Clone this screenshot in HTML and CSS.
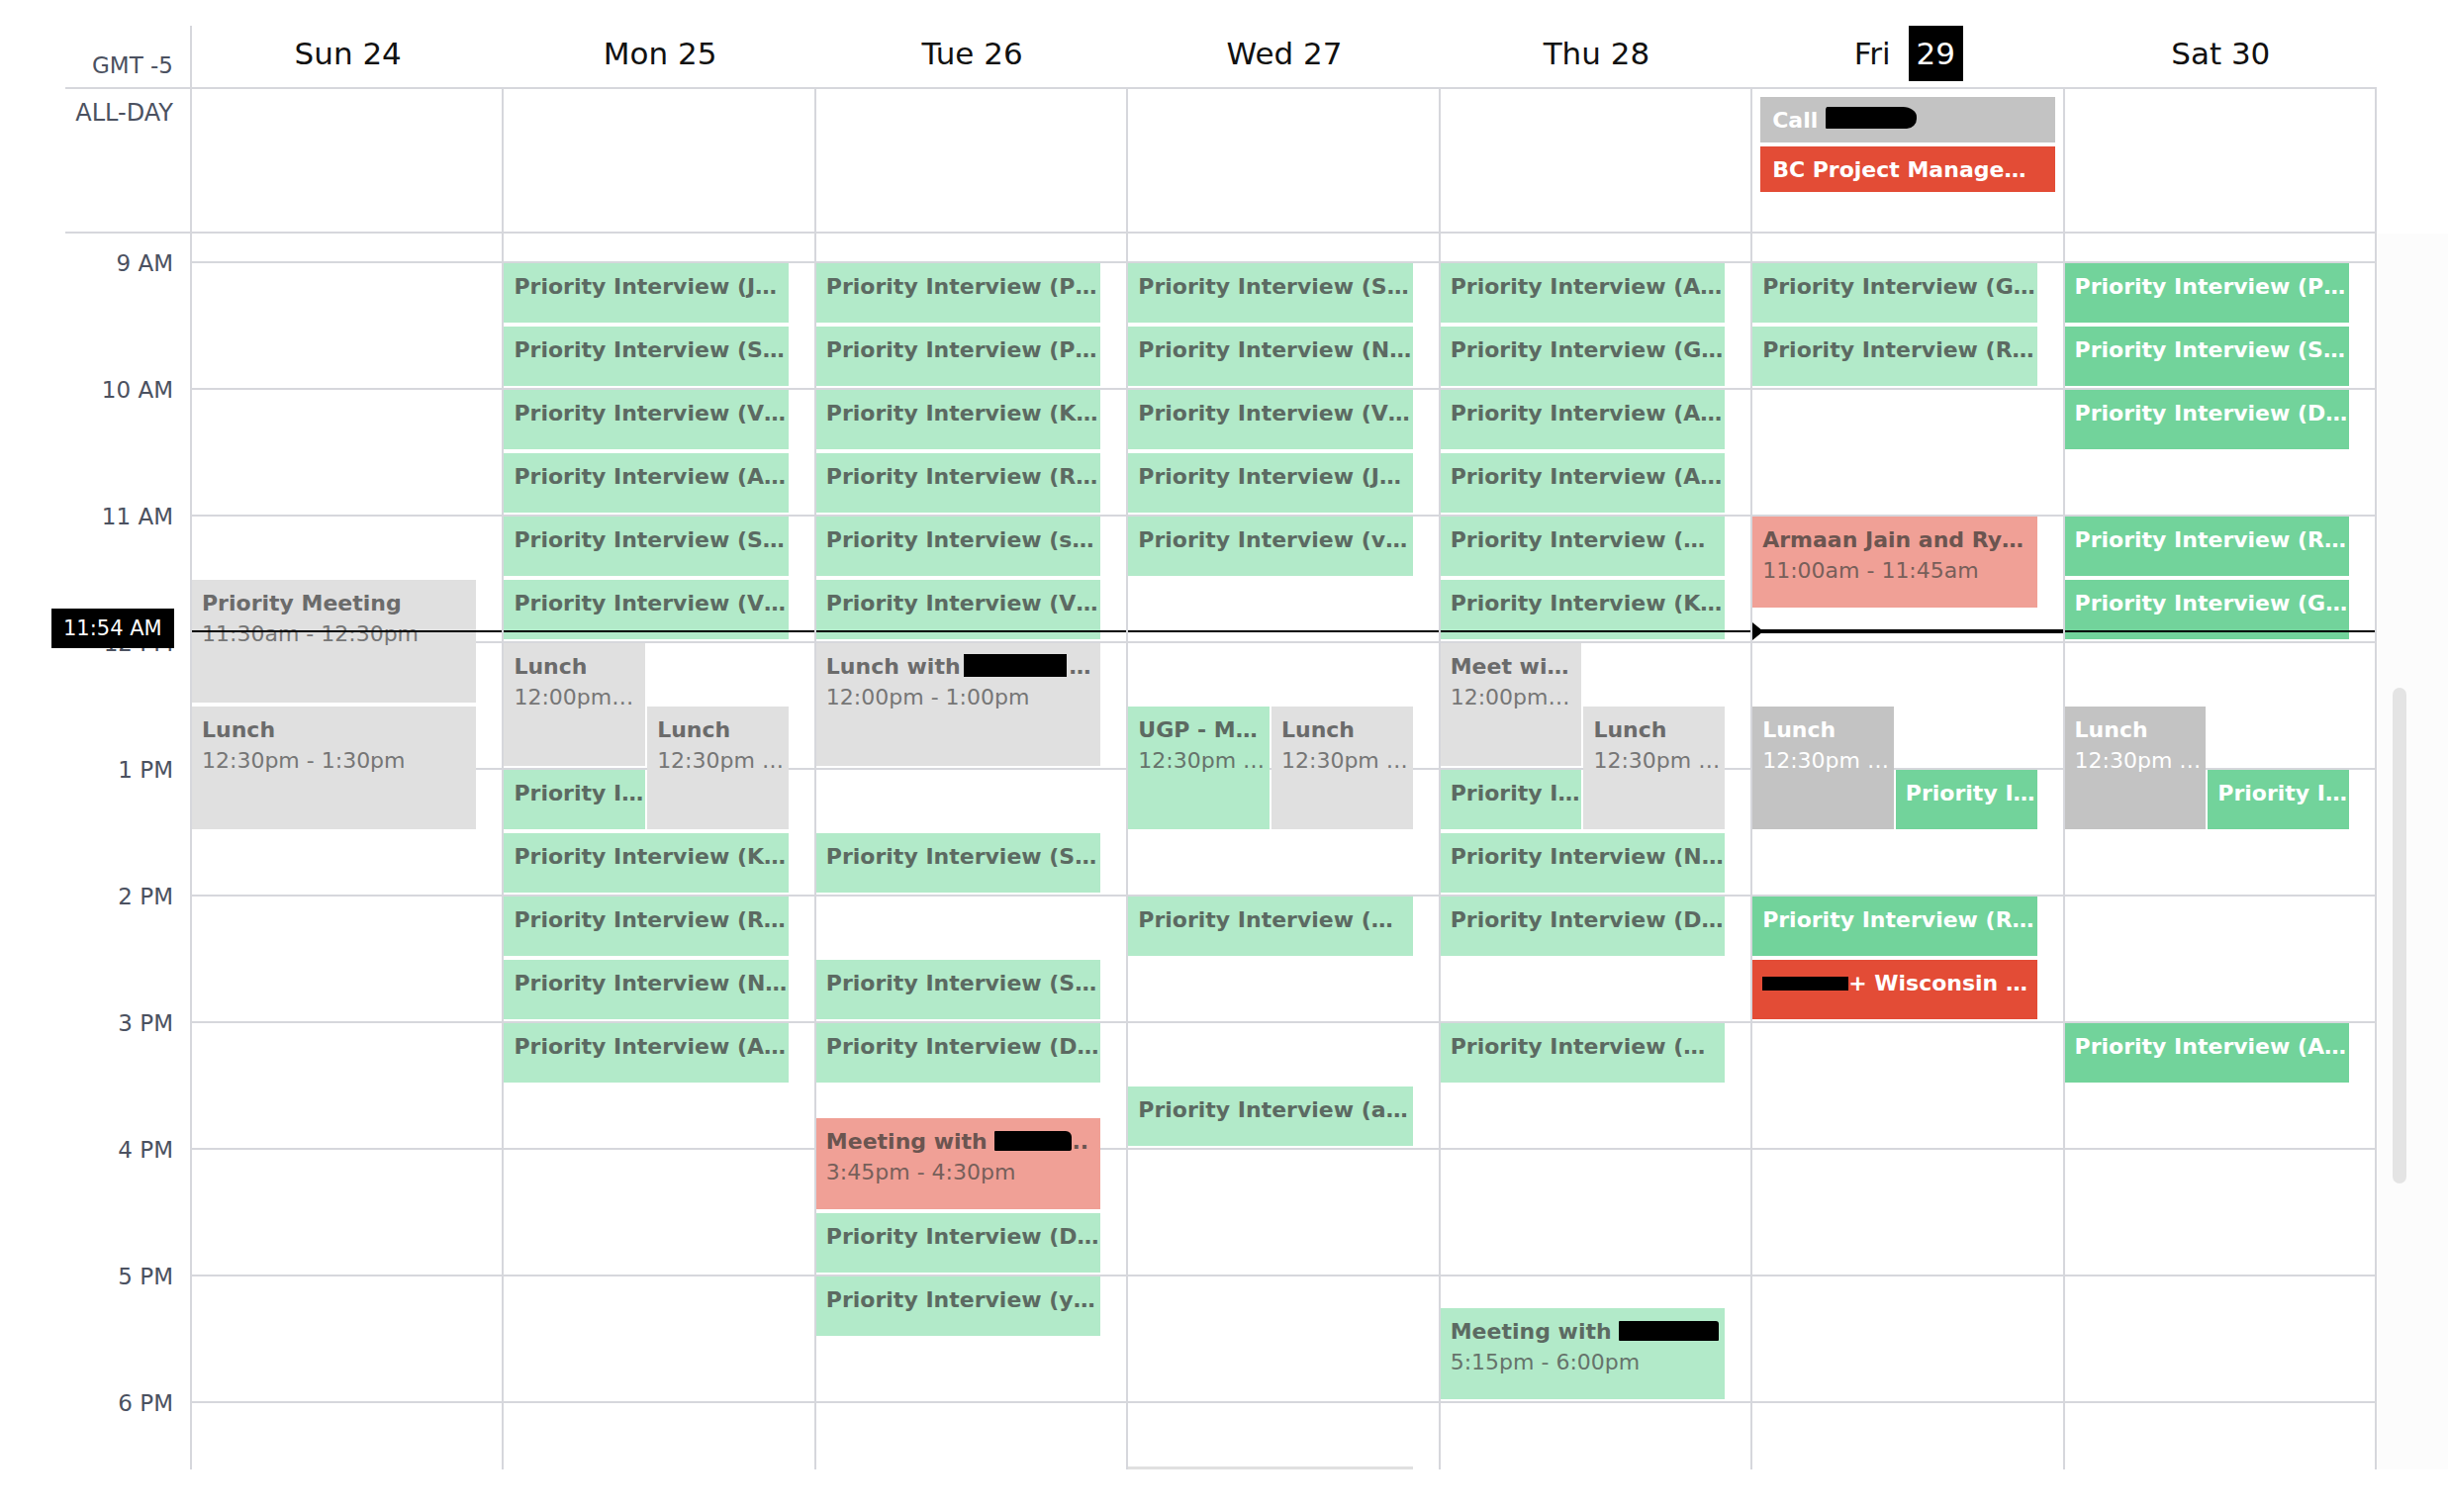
FILE: index.html
```html
<!DOCTYPE html>
<html lang="en">
<head>
<meta charset="utf-8">
<title>Week calendar</title>
<link rel="stylesheet" href="styles.css">
</head>
<body>
<div class="cal">
  <header class="head">
    <div class="gut gmt">GMT -5</div>
    <div class="dh">Sun 24</div>
    <div class="dh">Mon 25</div>
    <div class="dh">Tue 26</div>
    <div class="dh">Wed 27</div>
    <div class="dh">Thu 28</div>
    <div class="dh">Fri <span class="badge">29</span></div>
    <div class="dh">Sat 30</div>
  </header>

  <section class="allday">
    <div class="gut adl">ALL-DAY</div>
    <div class="adc"></div>
    <div class="adc"></div>
    <div class="adc"></div>
    <div class="adc"></div>
    <div class="adc"></div>
    <div class="adc">
      <div class="ade s2">Call <span class="redact rd-call"></span></div>
      <div class="ade r2">BC Project Manage…</div>
    </div>
    <div class="adc"></div>
  </section>

  <section class="body">
    <div class="viewport">
      <div class="inner">
        <div class="gutter">
          <div class="slot"></div>
          <div class="slot"><span>9 AM</span></div>
          <div class="slot"><span>10 AM</span></div>
          <div class="slot"><span>11 AM</span></div>
          <div class="slot"><span>12 PM</span></div>
          <div class="slot"><span>1 PM</span></div>
          <div class="slot"><span>2 PM</span></div>
          <div class="slot"><span>3 PM</span></div>
          <div class="slot"><span>4 PM</span></div>
          <div class="slot"><span>5 PM</span></div>
          <div class="slot"><span>6 PM</span></div>
          <div class="slot"></div>
        </div>

        <!-- Sun -->
        <div class="day">
          <div class="ev s1 m60" style="top:450px"><div class="t">Priority Meeting</div><div class="tm">11:30am - 12:30pm</div></div>
          <div class="ev s1 m60" style="top:578px"><div class="t">Lunch</div><div class="tm">12:30pm - 1:30pm</div></div>
          <div class="now"></div>
        </div>

        <!-- Mon -->
        <div class="day">
          <div class="ev g1 m30" style="top:130px"><div class="t">Priority Interview (J…</div></div>
          <div class="ev g1 m30" style="top:194px"><div class="t">Priority Interview (S…</div></div>
          <div class="ev g1 m30" style="top:258px"><div class="t">Priority Interview (V…</div></div>
          <div class="ev g1 m30" style="top:322px"><div class="t">Priority Interview (A…</div></div>
          <div class="ev g1 m30" style="top:386px"><div class="t">Priority Interview (S…</div></div>
          <div class="ev g1 m30" style="top:450px"><div class="t">Priority Interview (V…</div></div>
          <div class="ev s1 m60 ha" style="top:514px"><div class="t">Lunch</div><div class="tm">12:00pm…</div></div>
          <div class="ev s1 m60 hb" style="top:578px"><div class="t">Lunch</div><div class="tm">12:30pm …</div></div>
          <div class="ev g1 m30 ha" style="top:642px"><div class="t">Priority I…</div></div>
          <div class="ev g1 m30" style="top:706px"><div class="t">Priority Interview (K…</div></div>
          <div class="ev g1 m30" style="top:770px"><div class="t">Priority Interview (R…</div></div>
          <div class="ev g1 m30" style="top:834px"><div class="t">Priority Interview (N…</div></div>
          <div class="ev g1 m30" style="top:898px"><div class="t">Priority Interview (A…</div></div>
          <div class="now"></div>
        </div>

        <!-- Tue -->
        <div class="day">
          <div class="ev g1 m30" style="top:130px"><div class="t">Priority Interview (P…</div></div>
          <div class="ev g1 m30" style="top:194px"><div class="t">Priority Interview (P…</div></div>
          <div class="ev g1 m30" style="top:258px"><div class="t">Priority Interview (K…</div></div>
          <div class="ev g1 m30" style="top:322px"><div class="t">Priority Interview (R…</div></div>
          <div class="ev g1 m30" style="top:386px"><div class="t">Priority Interview (s…</div></div>
          <div class="ev g1 m30" style="top:450px"><div class="t">Priority Interview (V…</div></div>
          <div class="ev s1 m60" style="top:514px"><div class="t">Lunch with<span class="redact rd-lunch"></span>…</div><div class="tm">12:00pm - 1:00pm</div></div>
          <div class="ev g1 m30" style="top:706px"><div class="t">Priority Interview (S…</div></div>
          <div class="ev g1 m30" style="top:834px"><div class="t">Priority Interview (S…</div></div>
          <div class="ev g1 m30" style="top:898px"><div class="t">Priority Interview (D…</div></div>
          <div class="ev r1 m45" style="top:994px"><div class="t">Meeting with <span class="redact rd-meet1"></span>..</div><div class="tm">3:45pm - 4:30pm</div></div>
          <div class="ev g1 m30" style="top:1090px"><div class="t">Priority Interview (D…</div></div>
          <div class="ev g1 m30" style="top:1154px"><div class="t">Priority Interview (y…</div></div>
          <div class="now"></div>
        </div>

        <!-- Wed -->
        <div class="day">
          <div class="ev g1 m30" style="top:130px"><div class="t">Priority Interview (S…</div></div>
          <div class="ev g1 m30" style="top:194px"><div class="t">Priority Interview (N…</div></div>
          <div class="ev g1 m30" style="top:258px"><div class="t">Priority Interview (V…</div></div>
          <div class="ev g1 m30" style="top:322px"><div class="t">Priority Interview (J…</div></div>
          <div class="ev g1 m30" style="top:386px"><div class="t">Priority Interview (v…</div></div>
          <div class="ev g1 m60 ha" style="top:578px"><div class="t">UGP - M…</div><div class="tm">12:30pm …</div></div>
          <div class="ev s1 m60 hb" style="top:578px"><div class="t">Lunch</div><div class="tm">12:30pm …</div></div>
          <div class="ev g1 m30" style="top:770px"><div class="t">Priority Interview (…</div></div>
          <div class="ev g1 m30" style="top:962px"><div class="t">Priority Interview (a…</div></div>
          <div class="ev s1 m60" style="top:1346px"></div>
          <div class="now"></div>
        </div>

        <!-- Thu -->
        <div class="day">
          <div class="ev g1 m30" style="top:130px"><div class="t">Priority Interview (A…</div></div>
          <div class="ev g1 m30" style="top:194px"><div class="t">Priority Interview (G…</div></div>
          <div class="ev g1 m30" style="top:258px"><div class="t">Priority Interview (A…</div></div>
          <div class="ev g1 m30" style="top:322px"><div class="t">Priority Interview (A…</div></div>
          <div class="ev g1 m30" style="top:386px"><div class="t">Priority Interview (…</div></div>
          <div class="ev g1 m30" style="top:450px"><div class="t">Priority Interview (K…</div></div>
          <div class="ev s1 m60 ha" style="top:514px"><div class="t">Meet wi…</div><div class="tm">12:00pm…</div></div>
          <div class="ev s1 m60 hb" style="top:578px"><div class="t">Lunch</div><div class="tm">12:30pm …</div></div>
          <div class="ev g1 m30 ha" style="top:642px"><div class="t">Priority I…</div></div>
          <div class="ev g1 m30" style="top:706px"><div class="t">Priority Interview (N…</div></div>
          <div class="ev g1 m30" style="top:770px"><div class="t">Priority Interview (D…</div></div>
          <div class="ev g1 m30" style="top:898px"><div class="t">Priority Interview (…</div></div>
          <div class="ev g1 m45" style="top:1186px"><div class="t">Meeting with <span class="redact rd-meet2"></span></div><div class="tm">5:15pm - 6:00pm</div></div>
          <div class="now"></div>
        </div>

        <!-- Fri (today) -->
        <div class="day today">
          <div class="ev g1 m30" style="top:130px"><div class="t">Priority Interview (G…</div></div>
          <div class="ev g1 m30" style="top:194px"><div class="t">Priority Interview (R…</div></div>
          <div class="ev r1 m45" style="top:386px"><div class="t">Armaan Jain and Ry…</div><div class="tm">11:00am - 11:45am</div></div>
          <div class="ev s2 m60 ha" style="top:578px"><div class="t">Lunch</div><div class="tm">12:30pm …</div></div>
          <div class="ev g2 m30 hb" style="top:642px"><div class="t">Priority I…</div></div>
          <div class="ev g2 m30" style="top:770px"><div class="t">Priority Interview (R…</div></div>
          <div class="ev r2 m30" style="top:834px"><div class="t"><span class="redact rd-wisc"></span>+ Wisconsin …</div></div>
          <div class="now"></div>
        </div>

        <!-- Sat -->
        <div class="day">
          <div class="ev g2 m30" style="top:130px"><div class="t">Priority Interview (P…</div></div>
          <div class="ev g2 m30" style="top:194px"><div class="t">Priority Interview (S…</div></div>
          <div class="ev g2 m30" style="top:258px"><div class="t">Priority Interview (D…</div></div>
          <div class="ev g2 m30" style="top:386px"><div class="t">Priority Interview (R…</div></div>
          <div class="ev g2 m30" style="top:450px"><div class="t">Priority Interview (G…</div></div>
          <div class="ev s2 m60 ha" style="top:578px"><div class="t">Lunch</div><div class="tm">12:30pm …</div></div>
          <div class="ev g2 m30 hb" style="top:642px"><div class="t">Priority I…</div></div>
          <div class="ev g2 m30" style="top:898px"><div class="t">Priority Interview (A…</div></div>
          <div class="now"></div>
        </div>

        <div class="now-badge">11:54 AM</div>
      </div>
    </div>
    <div class="track"><div class="thumb"></div></div>
  </section>
</div>
</body>
</html>
```

FILE: styles.css
```css
:root {
  --line: #d6d7dc;
  --label: #4b5160;
}

* { box-sizing: border-box; }

body {
  margin: 0;
  background: #fff;
  color: #111;
  font-family: "DejaVu Sans", "Liberation Sans", sans-serif;
}

.cal {
  padding-top: 26px;
  width: 2474px;
}

/* ---------- header ---------- */
.head {
  margin-left: 66px;
  width: 2336px;
  height: 64px;
  display: grid;
  grid-template-columns: 128px repeat(7, 1fr);
  border-bottom: 2px solid var(--line);
}

.gut {
  border-right: 2px solid var(--line);
  text-align: right;
  padding-right: 17px;
  color: var(--label);
  font-size: 23px;
}

.gmt {
  padding-top: 26px;
  line-height: 28px;
}

.dh {
  display: flex;
  justify-content: center;
  align-items: flex-start;
  gap: 18px;
  font-size: 31px;
  line-height: 56px;
  color: #111;
}

.badge {
  background: #000;
  color: #fff;
  padding: 0 8px;
}

/* ---------- all-day ---------- */
.allday {
  margin-left: 66px;
  width: 2336px;
  height: 146px;
  display: grid;
  grid-template-columns: 128px repeat(7, 1fr);
  border-bottom: 2px solid var(--line);
}

.adl {
  padding-top: 10px;
  font-size: 24px;
  line-height: 28px;
}

.adc {
  border-right: 2px solid var(--line);
  padding: 8px 8px 0;
  display: flex;
  flex-direction: column;
  gap: 4px;
}

.ade {
  height: 46px;
  padding: 8px 12px 0;
  font-size: 22px;
  font-weight: 700;
  line-height: 31px;
  color: #fff;
  white-space: nowrap;
  overflow: hidden;
}

/* ---------- time grid ---------- */
.body {
  display: flex;
  height: 1249px;
}

.viewport {
  flex: none;
  width: 2402px;
  overflow: hidden;
}

.inner {
  position: relative;
  margin-top: -100px;
  display: grid;
  grid-template-columns: 194px repeat(7, 1fr);
}

.gutter {
  border-right: 2px solid var(--line);
  display: flex;
  flex-direction: column;
}

.slot {
  flex: none;
  height: 128px;
  display: flex;
  justify-content: flex-end;
  padding-right: 17px;
  font-size: 23px;
  color: var(--label);
}

.slot span {
  margin-top: -12.5px;
  height: 28px;
  line-height: 28px;
}

.day {
  position: relative;
  height: 1536px;
  border-right: 2px solid var(--line);
  background: repeating-linear-gradient(to bottom,
    var(--line) 0, var(--line) 2px,
    transparent 2px, transparent 128px);
}

/* ---------- events ---------- */
.ev {
  position: absolute;
  left: 0;
  right: 26px;
  padding: 8px 0 0 10px;
  overflow: hidden;
  font-size: 22px;
  line-height: 31px;
}

.ev .t {
  font-weight: 700;
  white-space: nowrap;
  overflow: hidden;
}

.ev .tm {
  white-space: nowrap;
  overflow: hidden;
}

.ha {
  right: auto;
  width: calc((100% - 28px) / 2);
}

.hb {
  left: calc((100% - 28px) / 2 + 2px);
}

.m30 { height: 60px; }
.m45 { height: 92px; }
.m60 { height: 124px; }

.g1 { background: #b2eac9; color: #5c6a62; }
.g2 { background: #72d39b; color: #fff; }
.s1 { background: #e0e0e0; color: #6b6b6b; }
.s2 { background: #c3c3c3; color: #fff; }
.r1 { background: #f0a096; color: #6b5550; }
.r2 { background: #e34c36; color: #fff; }

.g1 .tm { color: #66736b; }
.s1 .tm { color: #767676; }
.r1 .tm { color: #775f5a; }

/* redactions */
.redact {
  display: inline-block;
  background: #000;
}

.rd-call {
  width: 92px;
  height: 22px;
  vertical-align: -1px;
  border-radius: 2px 14px 10px 1px / 4px 10px 10px 1px;
}

.rd-lunch {
  width: 104px;
  height: 23px;
  margin: 0 3px;
  vertical-align: -3px;
}

.rd-meet1 {
  width: 78px;
  height: 20px;
  vertical-align: -2px;
  border-radius: 1px 6px 2px 1px;
}

.rd-meet2 {
  width: 101px;
  height: 20px;
  vertical-align: -2px;
  border-radius: 1px 3px 1px 1px;
}

.rd-wisc {
  width: 89px;
  height: 14px;
  margin-left: -2px;
}

/* ---------- now indicator ---------- */
.now {
  position: absolute;
  left: 0;
  right: 0;
  top: 501px;
  height: 2px;
  background: #000;
  z-index: 2;
}

.today .now {
  top: 500px;
  height: 4px;
}

.today .now::before {
  content: "";
  position: absolute;
  left: 0;
  top: -7px;
  border-left: 11px solid #000;
  border-top: 9px solid transparent;
  border-bottom: 9px solid transparent;
}

.now-badge {
  position: absolute;
  left: 52px;
  top: 479px;
  width: 124px;
  height: 40px;
  padding-left: 12px;
  background: #000;
  color: #fff;
  font-size: 21px;
  line-height: 40px;
  white-space: nowrap;
  z-index: 3;
}

/* ---------- scrollbar ---------- */
.track {
  flex: 1;
  background: #fcfcfc;
  padding: 459px 0 0 16px;
}

.thumb {
  width: 14px;
  height: 501px;
  border-radius: 7px;
  background: #e4e4e4;
}
```
